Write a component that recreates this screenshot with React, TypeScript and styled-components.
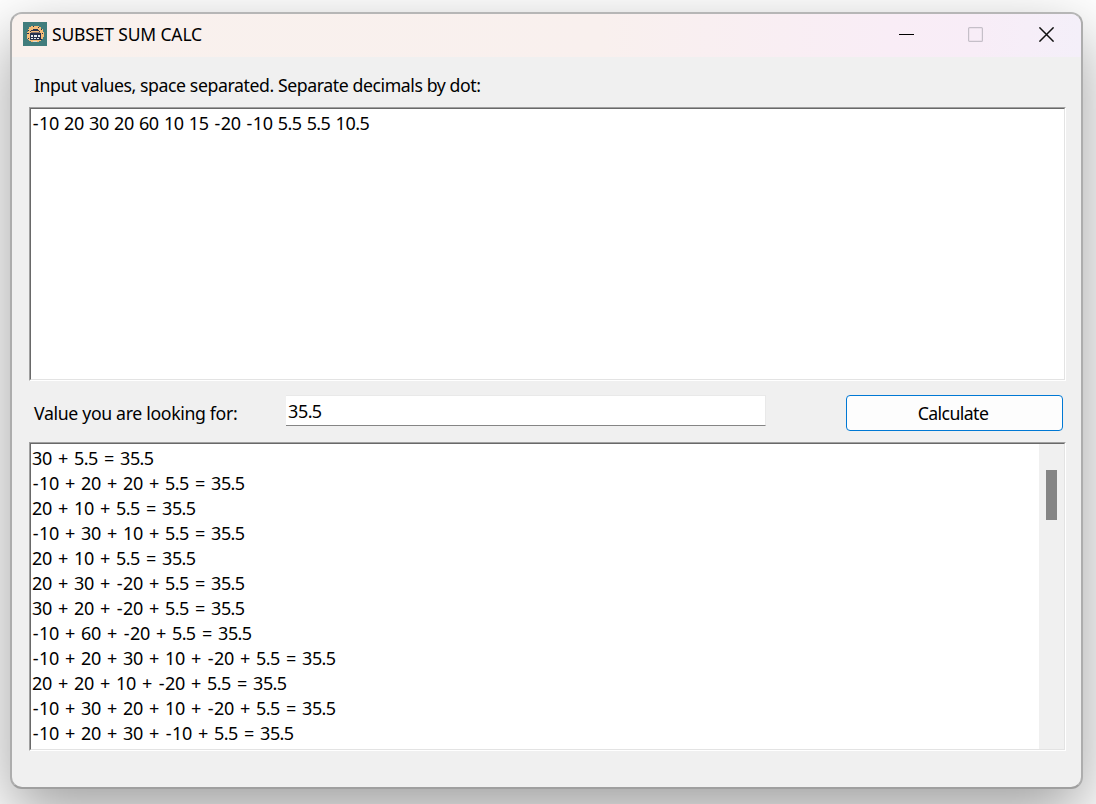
import React from 'react';
import styled, { createGlobalStyle } from 'styled-components';

const GlobalStyle = createGlobalStyle`
  * { box-sizing: border-box; }
  html, body { margin: 0; overflow: hidden; background: #fff; }
`;

const Desktop = styled.div`
  width: 1096px;
  height: 804px;
  padding: 12px 13px 15px 10px;
  overflow: hidden;
  color: #000;
  font-family: 'Noto Sans', sans-serif;
  font-size: 18px;
`;

const Window = styled.div`
  width: 1073px;
  height: 777px;
  display: flex;
  flex-direction: column;
  border: 2px solid;
  border-color: #b6b6b6 #adadad #9f9f9f #adadad;
  border-radius: 12px;
  background: #f0f0f0;
  box-shadow: 0 24px 64px rgba(0, 0, 0, 0.38);
`;

const TitleBar = styled.header`
  height: 43px;
  flex: none;
  display: flex;
  align-items: center;
  padding: 0 27px 3px 11px;
  border-radius: 10px 10px 0 0;
  background: linear-gradient(90deg, #f9f1ed 0%, #f9f0ee 55%, #f9edf6 82%, #f8edf7 90%, #f4eff9 100%);
`;

const AppIcon = styled.svg`
  width: 24px;
  height: 24px;
  flex: none;
`;

const Title = styled.h1`
  flex: 1;
  margin: 0 0 0 5px;
  font-size: 17.5px;
  font-weight: 400;
  line-height: 24px;
  letter-spacing: -0.16px;
`;

const Controls = styled.div`
  display: flex;
  align-items: center;
  padding-top: 1px;
`;

const ControlIcon = styled.svg<{ $gap?: number }>`
  width: 15px;
  height: 15px;
  margin-left: ${(p) => p.$gap ?? 0}px;
  fill: none;
  stroke: #111;
`;

const Content = styled.main`
  flex: 1;
  display: flex;
  flex-direction: column;
  padding: 16px 15px 36px 17px;
`;

const Label = styled.label<{ $tracking: number }>`
  font-size: 17.7px;
  line-height: 25px;
  letter-spacing: ${(p) => p.$tracking}px;
  white-space: nowrap;
`;

const FieldHeading = styled.div`
  display: flex;
  height: 34px;
  padding-left: 5px;
`;

const SunkenBox = styled.div<{ $height: number }>`
  height: ${(p) => p.$height}px;
  flex: none;
  border: 1px solid;
  border-color: #a0a0a0 #fff #fff #a0a0a0;
`;

const SunkenInner = styled.div`
  height: 100%;
  display: flex;
  border: 1px solid;
  border-color: #696969 #e3e3e3 #e3e3e3 #696969;
  background: #fff;
`;

const Lines = styled.div`
  flex: 1;
  overflow: hidden;
  padding: 2px 0 0 1px;
`;

const Line = styled.div`
  line-height: 25px;
  letter-spacing: -0.33px;
  word-spacing: 0.7px;
  white-space: nowrap;
`;

const Glyph = styled.span<{ $pad: number }>`
  margin: 0 ${(p) => p.$pad}px;
`;

const SearchRow = styled.div`
  height: 61px;
  flex: none;
  display: flex;
  align-items: flex-start;
  padding: 14px 3px 0 5px;
`;

const ValueLabel = styled.div`
  width: 252px;
  padding-top: 6px;
  display: flex;
`;

const ValueInput = styled.div`
  width: 480px;
  height: 31px;
  padding: 3px 0 0 2px;
  border: 1px solid;
  border-color: #e9e9e9 #e9e9e9 #858585 #f5f5f5;
  border-left-width: 0;
  background: #fff;
`;

const Button = styled.button`
  width: 217px;
  height: 36px;
  margin-left: auto;
  padding: 0 3px 0 0;
  border: 1px solid #0078d4;
  border-radius: 4px;
  background: #fdfdfd;
  color: #000;
  font: inherit;
  font-size: 17.7px;
  letter-spacing: -0.6px;
`;

const ScrollTrack = styled.div`
  width: 25px;
  padding: 26px 0 0 7px;
  background: #f0f0f0;
`;

const ScrollThumb = styled.div`
  width: 11px;
  height: 50px;
  background: #858585;
`;

const results = [
  '30 + 5.5 = 35.5',
  '-10 + 20 + 20 + 5.5 = 35.5',
  '20 + 10 + 5.5 = 35.5',
  '-10 + 30 + 10 + 5.5 = 35.5',
  '20 + 10 + 5.5 = 35.5',
  '20 + 30 + -20 + 5.5 = 35.5',
  '30 + 20 + -20 + 5.5 = 35.5',
  '-10 + 60 + -20 + 5.5 = 35.5',
  '-10 + 20 + 30 + 10 + -20 + 5.5 = 35.5',
  '20 + 20 + 10 + -20 + 5.5 = 35.5',
  '-10 + 30 + 20 + 10 + -20 + 5.5 = 35.5',
  '-10 + 20 + 30 + -10 + 5.5 = 35.5',
];

// Side margins for the characters that are set wider or tighter than digits.
const glyphPad: Record<string, number> = { '+': 1, '=': 1, '-': 0.75, '.': -0.3 };

function NumberLine({ text }: { text: string }) {
  return (
    <Line>
      {text.split(/([-+=.])/).map((part, i) =>
        part in glyphPad ? <Glyph key={i} $pad={glyphPad[part]}>{part}</Glyph> : part,
      )}
    </Line>
  );
}

export default function App() {
  return (
    <>
      <GlobalStyle />
      <Desktop>
        <Window>
          <TitleBar>
            <AppIcon viewBox="0 0 24 24" shapeRendering="crispEdges">
              <path fill="#417d7c" d="M0 0h24v24H0z" />
              <path fill="#f5bd79" d="M8 4h8v1h2v2h2v3h1v5h-1v2h-1v1h-1v1h-2v1H8v-1H6v-1H5v-1H4v-7h1V7h1V5h2z" />
              <path fill="#24324f" d="M10 4h1v1h-1zM15 5h1v1h-1zM10 7h5v1h-5zM8 8h8v1H8zM16 9h1v1h-1zM5 8h1v1H5zM18 7h1v1h-1zM4 11h2v1H4zM19 11h1v1h-1zM7 9h1v1H7zM7 11h11v7H7zM5 16h1v1H5zM18 17h1v1h-1z" />
              <path fill="#8b7670" d="M8 10h9v1H8z" />
              <path fill="#e8edf2" d="M8 13h2v2H8zM11 13h3v2h-3zM15 13h2v2h-2zM8 16h2v1H8zM11 16h2v1h-2zM14 16h2v1h-2z" />
              <path fill="#d8dad0" d="M10 19h4v1h-4z" />
            </AppIcon>
            <Title>SUBSET SUM CALC</Title>
            <Controls>
              <ControlIcon viewBox="0 0 15 15"><path d="M0 7.5h15" stroke="#000" /></ControlIcon>
              <ControlIcon $gap={54} viewBox="0 0 15 15"><rect x=".6" y=".6" width="13.8" height="13.8" rx="1" stroke="#c5bfc8" strokeWidth="1.2" /></ControlIcon>
              <ControlIcon $gap={56} viewBox="0 0 15 15"><path d="M.4.4l14.2 14.2M14.6.4L.4 14.6" strokeWidth="1.5" /></ControlIcon>
            </Controls>
          </TitleBar>
          <Content>
            <FieldHeading>
              <Label $tracking={-0.42}>Input values, space separated. Separate decimals by dot:</Label>
            </FieldHeading>
            <SunkenBox $height={274}>
              <SunkenInner>
                <Lines><NumberLine text="-10 20 30 20 60 10 15 -20 -10 5.5 5.5 10.5" /></Lines>
              </SunkenInner>
            </SunkenBox>
            <SearchRow>
              <ValueLabel><Label $tracking={-0.34}>Value you are looking for:</Label></ValueLabel>
              <ValueInput><NumberLine text="35.5" /></ValueInput>
              <Button>Calculate</Button>
            </SearchRow>
            <SunkenBox $height={309}>
              <SunkenInner>
                <Lines>{results.map((r, i) => <NumberLine key={i} text={r} />)}</Lines>
                <ScrollTrack><ScrollThumb /></ScrollTrack>
              </SunkenInner>
            </SunkenBox>
          </Content>
        </Window>
      </Desktop>
    </>
  );
}
